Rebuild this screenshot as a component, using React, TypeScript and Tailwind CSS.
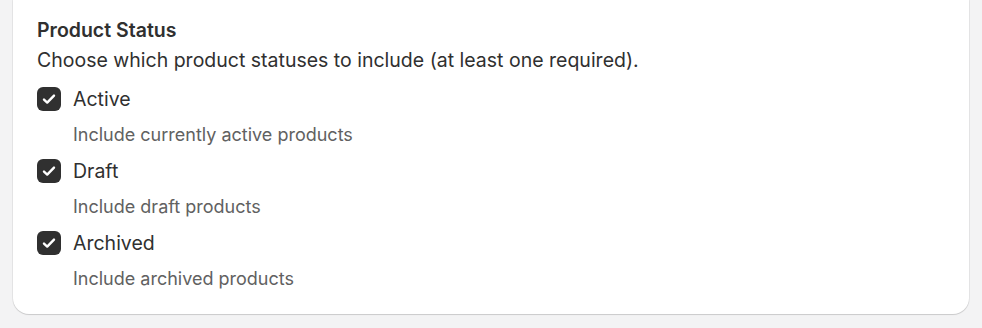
import React from "react";

const items = [
  { label: "Active", help: "Include currently active products" },
  { label: "Draft", help: "Include draft products" },
  { label: "Archived", help: "Include archived products" },
];

function Check() {
  return (
    <span className="flex h-6 w-6 shrink-0 items-center justify-center rounded-[6px] bg-[#303030]">
      <svg width="24" height="24" viewBox="0 0 24 24" fill="none">
        <path d="M7 12.6 L10.2 15.6 L17 8.6" stroke="white" strokeWidth="2.4" strokeLinecap="round" strokeLinejoin="round" />
      </svg>
    </span>
  );
}

export default function App() {
  return (
    <div className="min-h-[328px] bg-[#f3f3f4] px-[13px] pb-[14px]" style={{ fontFamily: "Inter, 'Noto Sans', sans-serif" }}>
      <div className="rounded-b-[16px] bg-white px-6 pt-[15px] pb-[22px] shadow-[0_1px_1px_0_rgba(0,0,0,0.12),0_0_0_1px_rgba(0,0,0,0.05)]">
        <div className="text-[19.5px] leading-[30px] font-semibold text-[#303030]">Product Status</div>
        <div className="text-[19.5px] leading-[30px] text-[#303030]">
          Choose which product statuses to include (at least one required).
        </div>
        <div className="mt-[9px] flex flex-col gap-[8px]">
          {items.map((it) => (
            <div key={it.label} className="flex flex-col gap-[7px]">
              <label className="flex h-[30px] items-center gap-3">
                <Check />
                <span className="text-[19.5px] leading-[30px] text-[#303030]">{it.label}</span>
              </label>
              <div className="pl-9 text-[18px] leading-[27px] text-[#616161]">{it.help}</div>
            </div>
          ))}
        </div>
      </div>
    </div>
  );
}
